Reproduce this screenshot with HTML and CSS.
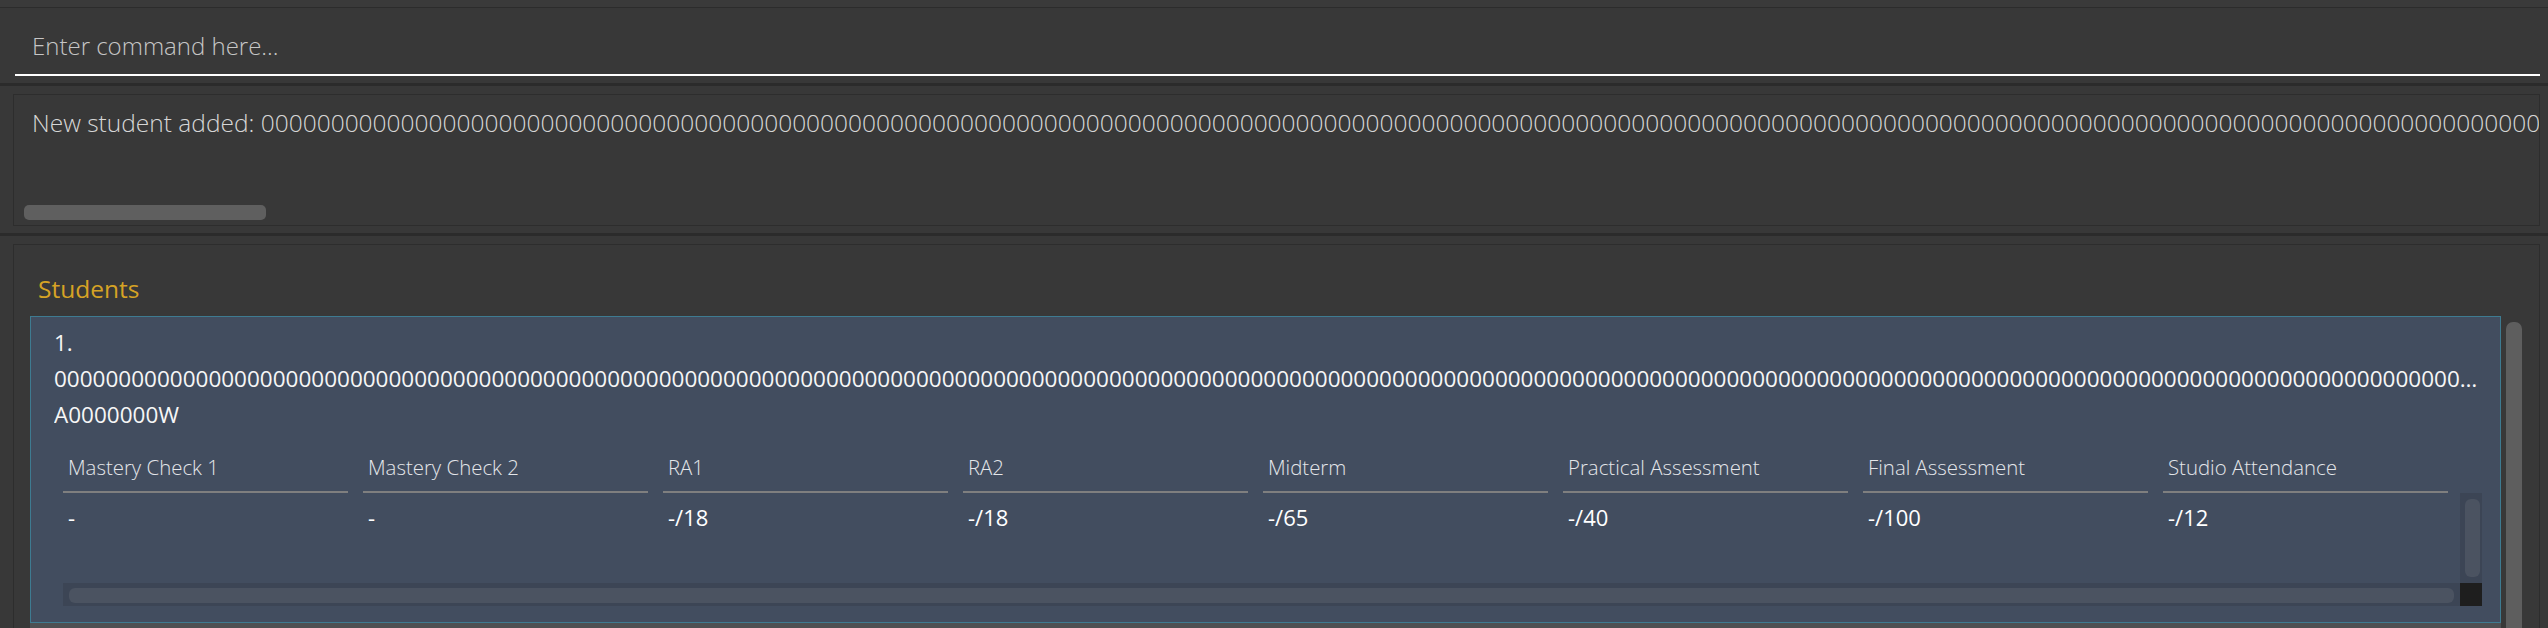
FILE: index.html
```html
<!DOCTYPE html>
<html lang="en">
<head>
<meta charset="utf-8">
<title>Students</title>
<link rel="stylesheet" href="styles.css">
</head>
<body>
<div class="app">
  <div class="menubar"></div>
  <div class="command-pane">
    <div class="command-field"><span class="placeholder">Enter command here...</span></div>
  </div>
  <div class="divider"></div>
  <div class="result-pane">
    <div class="result-box">
      <div class="result-text">New student added: 00000000000000000000000000000000000000000000000000000000000000000000000000000000000000000000000000000000000000000000000000000000000000000000000000000000000000000000000000000000000000000000000000000000000000000000000000000000</div>
      <div class="hscroll"><div class="hscroll-thumb"></div></div>
    </div>
  </div>
  <div class="divider"></div>
  <div class="list-pane">
    <div class="list-box">
      <div class="list-title">Students</div>
      <div class="list-body">
        <div class="list-cells">
          <div class="card">
            <div class="card-line">1.</div>
            <div class="card-line">00000000000000000000000000000000000000000000000000000000000000000000000000000000000000000000000000000000000000000000000000000000000000000000000000000000000000000000000000000000000000000000000000000000000000000000000000000000</div>
            <div class="card-line">A0000000W</div>
            <div class="grades">
              <div class="grades-head">
                <div class="th">Mastery Check 1</div>
                <div class="th">Mastery Check 2</div>
                <div class="th">RA1</div>
                <div class="th">RA2</div>
                <div class="th">Midterm</div>
                <div class="th">Practical Assessment</div>
                <div class="th">Final Assessment</div>
                <div class="th">Studio Attendance</div>
              </div>
              <div class="grades-body">
                <div class="td">-</div>
                <div class="td">-</div>
                <div class="td">-/18</div>
                <div class="td">-/18</div>
                <div class="td">-/65</div>
                <div class="td">-/40</div>
                <div class="td">-/100</div>
                <div class="td">-/12</div>
              </div>
              <div class="vtrack"><div class="vtrack-thumb"></div></div>
              <div class="htrack"><div class="htrack-thumb"></div></div>
              <div class="corner"></div>
            </div>
          </div>
          <div class="next-cell"></div>
        </div>
        <div class="vscroll"><div class="vscroll-thumb"></div></div>
      </div>
    </div>
  </div>
</div>
</body>
</html>
```
FILE: styles.css
```css
* { box-sizing: border-box; }
html, body { margin: 0; padding: 0; }
body {
  width: 2548px;
  height: 628px;
  overflow: hidden;
  background: #383838;
  font-family: "Open Sans", "Noto Sans", sans-serif;
}
.app { display: flex; flex-direction: column; height: 628px; }

.menubar { height: 8px; flex: none; background: #3a3a3a; border-bottom: 1px solid #2c2c2c; }

.command-pane { height: 75px; flex: none; padding: 0 8px 0 15px; }
.command-field { padding: 22px 0 12px 17px; border-bottom: 2px solid #ffffff; }
.placeholder {
  display: block;
  font-size: 24px;
  line-height: 32px;
  font-weight: 300;
  color: #c6c6c6;
}

.divider { height: 3px; flex: none; background: #2b2b2b; }

.result-pane { height: 147px; flex: none; padding: 8px 8px 7px 13px; }
.result-box {
  height: 100%;
  border: 1px solid #2d2d2d;
  display: flex;
  flex-direction: column;
  padding-top: 12px;
}
.result-text {
  padding-left: 18px;
  font-size: 24.5px;
  line-height: 32px;
  font-weight: 300;
  color: #d6d6d6;
  white-space: nowrap;
  overflow: hidden;
}
.hscroll { margin-top: auto; padding: 0 0 5px 10px; }
.hscroll-thumb { width: 242px; height: 15px; border-radius: 5px; background: #5f5f5f; }

.list-pane { flex: 1; min-height: 0; padding: 8px 8px 0 13px; }
.list-box {
  height: 100%;
  border: 1px solid #2d2d2d;
  border-bottom: none;
  padding-top: 27px;
  display: flex;
  flex-direction: column;
}
.list-title {
  padding-left: 24px;
  font-size: 24.5px;
  line-height: 33px;
  font-weight: 500;
  color: #d6a325;
  margin-bottom: 11px;
}
.list-body { flex: 1; min-height: 0; display: flex; padding-left: 16px; }
.list-cells { flex: 1; min-width: 0; display: flex; flex-direction: column; }
.vscroll { width: 16px; flex: none; margin-left: 5px; margin-right: 17px; padding-top: 6px; }
.vscroll-thumb { height: 100%; background: #5e5e5e; border-radius: 7px 7px 0 0; }

.card {
  height: 307px;
  flex: none;
  border: 1px solid #3e7b91;
  background: #424d5f;
  padding: 8px 18px 0 23px;
}
.card-line {
  font-size: 22.5px;
  line-height: 36px;
  font-weight: 500;
  color: #f6f6f6;
  white-space: nowrap;
  overflow: hidden;
  text-overflow: ellipsis;
}
.next-cell { flex: 1; background: #4e5052; }

.grades {
  margin-left: 9px;
  display: grid;
  grid-template-columns: 1fr 22px;
  grid-template-rows: 60px 90px 23px;
}
.grades-head { grid-column: 1 / 3; display: flex; overflow: hidden; }
.th {
  flex: 0 0 285px;
  margin-right: 15px;
  border-bottom: 2px solid #7f7f7f;
  padding: 20px 0 0 5px;
  font-size: 20.4px;
  line-height: 28px;
  font-weight: 300;
  color: #e4e6ea;
  white-space: nowrap;
}
.grades-body { display: flex; overflow: hidden; }
.td {
  flex: 0 0 300px;
  padding: 10px 0 0 5px;
  font-size: 22px;
  line-height: 28px;
  color: #ffffff;
}
.vtrack { background: #3c4555; padding: 6px 2px 6px 5px; }
.vtrack-thumb { height: 100%; background: #4b5361; border-radius: 6px; }
.htrack { background: #3c4555; padding: 5px 6px 3px 6px; }
.htrack-thumb { height: 100%; background: #4b5361; border-radius: 6px; }
.corner { background: #1e1e1e; }
```
